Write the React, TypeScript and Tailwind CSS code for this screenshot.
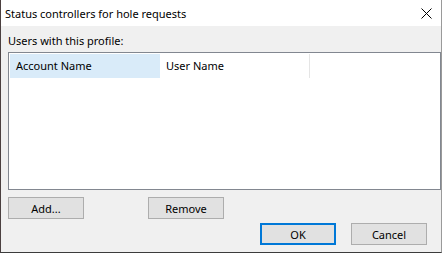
import React from "react";

const font = { fontFamily: '"Noto Sans", "Liberation Sans", sans-serif' };

function Btn({ label, primary }: { label: string; primary?: boolean }) {
  return (
    <button
      className={
        primary
          ? "w-[76px] h-[22px] bg-[#e1e1e1] border-2 border-[#0078d7] text-[11px] text-black leading-none flex items-center justify-center"
          : "w-[76px] h-[22px] bg-[#e1e1e1] border border-[#adadad] text-[11px] text-black leading-none flex items-center justify-center"
      }
    >
      {label}
    </button>
  );
}

export default function App() {
  return (
    <div
      className="w-[442px] h-[253px] bg-[#f0f0f0] flex flex-col border-l border-l-[#4b4040] border-r border-r-[#9a9a9a] border-b border-b-[#3c3c3c] overflow-hidden"
      style={font}
    >
      <div className="h-[26px] bg-white flex items-center justify-between pl-[4px] pr-[9px] shrink-0">
        <span className="text-[11px] text-black leading-none">Status controllers for hole requests</span>
        <svg width="11" height="11" viewBox="0 0 11 11">
          <path d="M0.5 0.5 L10.5 10.5 M10.5 0.5 L0.5 10.5" stroke="#000" strokeWidth="1" />
        </svg>
      </div>
      <div className="flex flex-col pl-[7px]">
        <div className="mt-[8px] text-[11px] text-black leading-[14px] h-[14px]">Users with this profile:</div>
        <div className="mt-[4px] w-[433px] h-[138px] border border-[#828790] bg-white p-[1px]">
          <div className="flex h-[24px] text-[11px] text-black">
            <div className="w-[150px] bg-[#d9ebf9] flex items-center pl-[6px]">Account Name</div>
            <div className="w-[150px] flex items-center pl-[6px] border-r border-[#e5e5e5]">User Name</div>
          </div>
        </div>
        <div className="mt-[7px] flex">
          <Btn label="Add..." />
          <div className="ml-[64px]">
            <Btn label="Remove" />
          </div>
        </div>
        <div className="mt-[4px] flex pl-[252px] gap-[15px]">
          <Btn label="OK" primary />
          <Btn label="Cancel" />
        </div>
      </div>
    </div>
  );
}
